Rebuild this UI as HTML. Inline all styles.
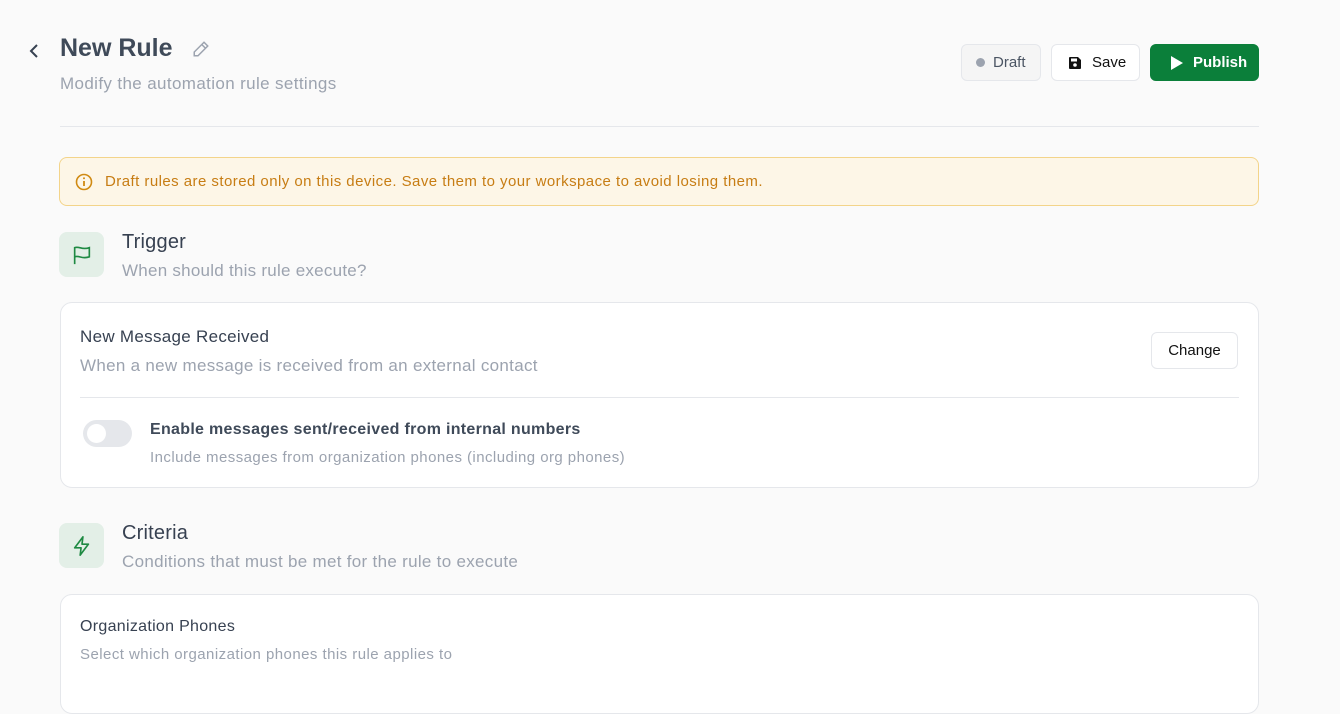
<!DOCTYPE html>
<html><head><style>
*{box-sizing:border-box;margin:0;padding:0}
body{width:1340px;height:678px;overflow:hidden;background:#fafafa;font-family:"Liberation Sans",sans-serif;color:#374151;position:relative}
.a{position:absolute}
.btn{position:absolute;border:1px solid #e5e7eb;border-radius:6px;display:flex;align-items:center;font-size:15px}
.card{position:absolute;left:60px;width:1199px;background:#fff;border:1px solid #e5e7eb;border-radius:12px}
.ib{position:absolute;left:59px;width:45px;height:45px;border-radius:8px;background:#e3efe7;display:flex;align-items:center;justify-content:center}
</style></head><body>
<svg class="a" style="left:26px;top:42px" width="16" height="18" viewBox="0 0 16 18"><path d="M11 3L5 9l6 6" fill="none" stroke="#374151" stroke-width="2"/></svg>
<div class="a" style="left:60px;top:34px;font-size:25px;font-weight:bold;color:#3f4a59">New Rule</div>
<svg class="a" style="left:192px;top:40px" width="18" height="18" viewBox="0 0 24 24"><path d="M16 3l5 5L8 21H3v-5z M13 6l5 5" fill="none" stroke="#9ca3af" stroke-width="2"/></svg>
<div class="a" style="left:60px;top:74px;font-size:17px;color:#9ca3af;letter-spacing:0.37px">Modify the automation rule settings</div>
<div class="btn" style="left:961px;top:44px;width:80px;height:37px;background:#f5f5f5;padding-left:14px;color:#4b5563"><span style="width:9px;height:9px;border-radius:50%;background:#9ca3af;margin-right:8px"></span>Draft</div>
<div class="btn" style="left:1051px;top:44px;width:89px;height:37px;background:#fff;padding-left:16px;color:#111"><svg width="14" height="14" viewBox="0 0 14 14" style="margin-right:10px"><path d="M1 2a1 1 0 011-1h8l3 3v8a1 1 0 01-1 1H2a1 1 0 01-1-1z" fill="#111"/><rect x="3" y="2.5" width="6" height="3" fill="#fff"/><circle cx="7" cy="9" r="1.8" fill="#fff"/></svg>Save</div>
<div class="btn" style="left:1150px;top:44px;width:109px;height:37px;background:#0b7f3a;border-color:#0b7f3a;color:#fff;font-weight:bold;padding-left:19px"><svg width="14" height="16" viewBox="0 0 14 16" style="margin-right:9px"><path d="M1 1l12 7-12 7z" fill="#fff"/></svg>Publish</div>
<div class="a" style="left:60px;top:126px;width:1199px;height:1px;background:#e5e7eb"></div>
<div class="a" style="left:59px;top:157px;width:1200px;height:49px;background:#fdf6e7;border:1px solid #f3d48a;border-radius:8px"></div>
<svg class="a" style="left:75px;top:173px" width="18" height="18" viewBox="0 0 18 18"><circle cx="9" cy="9" r="7.5" fill="none" stroke="#d08a12" stroke-width="1.6"/><path d="M9 8v5" stroke="#d08a12" stroke-width="1.8"/><circle cx="9" cy="5.3" r="1" fill="#d08a12"/></svg>
<div class="a" style="left:105px;top:173px;font-size:15px;color:#c77d14;letter-spacing:0.45px">Draft rules are stored only on this device. Save them to your workspace to avoid losing them.</div>
<div class="ib" style="top:232px"><svg width="22" height="22" viewBox="0 0 24 24"><path d="M4 22V4c5-2 8 3 16 0v10c-8 3-11-2-16 0" fill="none" stroke="#1f8a43" stroke-width="1.8"/></svg></div>
<div class="a" style="left:122px;top:231px;font-size:20px;color:#374151;letter-spacing:0.2px">Trigger</div>
<div class="a" style="left:122px;top:261px;font-size:17px;color:#9ca3af;letter-spacing:0.25px">When should this rule execute?</div>
<div class="card" style="top:302px;height:186px">
<div class="a" style="left:19px;top:24px;font-size:17px;color:#374151;letter-spacing:0.3px">New Message Received</div>
<div class="a" style="left:19px;top:53px;font-size:17px;color:#9ca3af;letter-spacing:0.3px">When a new message is received from an external contact</div>
<div class="btn" style="left:1090px;top:29px;width:87px;height:37px;background:#fff;justify-content:center;color:#111">Change</div>
<div class="a" style="left:19px;top:94px;width:1159px;height:1px;background:#e5e7eb"></div>
<div class="a" style="left:22px;top:117px;width:49px;height:27px;border-radius:14px;background:#e5e7eb"><div class="a" style="left:4px;top:4px;width:19px;height:19px;border-radius:50%;background:#fff"></div></div>
<div class="a" style="left:89px;top:118px;font-size:16px;font-weight:bold;color:#3f4a59;letter-spacing:0.3px">Enable messages sent/received from internal numbers</div>
<div class="a" style="left:89px;top:146px;font-size:15px;color:#9ca3af;letter-spacing:0.44px">Include messages from organization phones (including org phones)</div>
</div>
<div class="ib" style="top:523px"><svg width="22" height="22" viewBox="0 0 24 24"><path d="M13 2L4 14h7l-1 8 9-12h-7z" fill="none" stroke="#1f8a43" stroke-width="1.8" stroke-linejoin="round"/></svg></div>
<div class="a" style="left:122px;top:522px;font-size:20px;color:#374151;letter-spacing:0.2px">Criteria</div>
<div class="a" style="left:122px;top:552px;font-size:17px;color:#9ca3af;letter-spacing:0.3px">Conditions that must be met for the rule to execute</div>
<div class="card" style="top:594px;height:120px">
<div class="a" style="left:19px;top:23px;font-size:16px;color:#374151;letter-spacing:0.3px">Organization Phones</div>
<div class="a" style="left:19px;top:51px;font-size:15px;color:#9ca3af;letter-spacing:0.45px">Select which organization phones this rule applies to</div>
</div>
</body></html>
